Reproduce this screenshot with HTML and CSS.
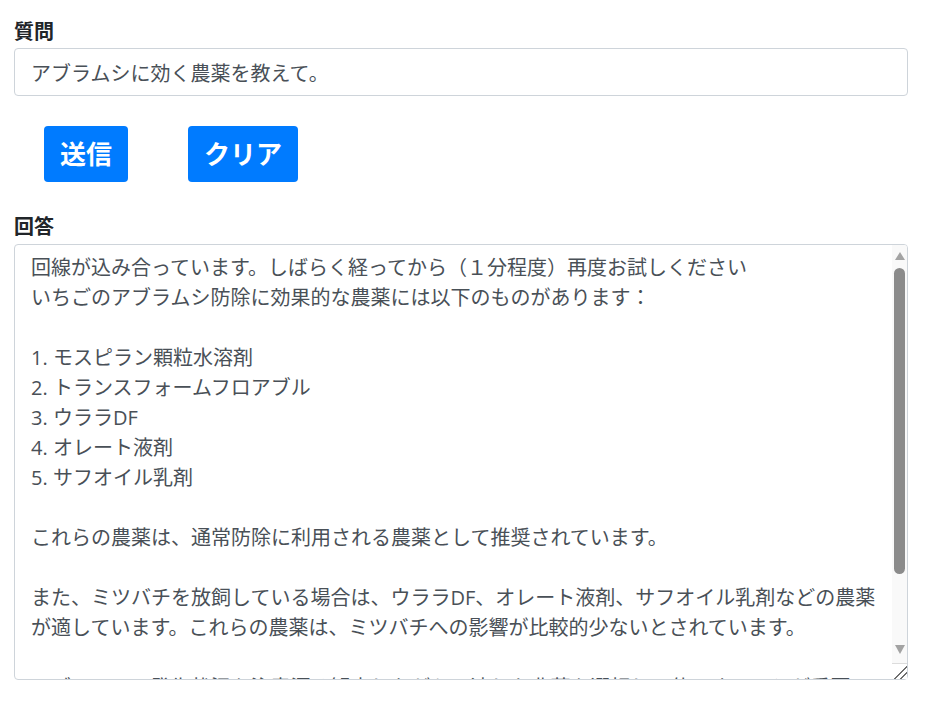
FILE: index.html
```html
<!DOCTYPE html>
<html lang="ja">
<head>
<meta charset="utf-8">
<title>質問</title>
<link rel="stylesheet" href="styles.css">
</head>
<body>
<main class="page">
  <label class="field-label" for="q">質問</label>
  <input id="q" class="form-control" type="text" value="アブラムシに効く農薬を教えて。">
  <div class="actions">
    <button class="btn" type="button">送信</button>
    <button class="btn" type="button">クリア</button>
  </div>
  <label class="field-label answer-label" for="a">回答</label>
  <div class="answer-wrap">
    <textarea id="a" class="form-control answer">回線が込み合っています。しばらく経ってから（１分程度）再度お試しください
いちごのアブラムシ防除に効果的な農薬には以下のものがあります：

1. モスピラン顆粒水溶剤
2. トランスフォームフロアブル
3. ウララDF
4. オレート液剤
5. サフオイル乳剤

これらの農薬は、通常防除に利用される農薬として推奨されています。

また、ミツバチを放飼している場合は、ウララDF、オレート液剤、サフオイル乳剤などの農薬が適しています。これらの農薬は、ミツバチへの影響が比較的少ないとされています。

アブラムシの発生状況を注意深く観察しながら、適した農薬を選択し、使用することが重要です。
</textarea>
    <div class="scrollbar" aria-hidden="true">
      <span class="sb-arrow sb-up"></span>
      <span class="sb-thumb"></span>
      <span class="sb-spacer"></span>
      <span class="sb-arrow sb-down"></span>
    </div>
  </div>
</main>
</body>
</html>
```
FILE: styles.css
```css
html, body {
  margin: 0;
  padding: 0;
  background: #ffffff;
}

body {
  font-family: "Open Sans", "Noto Sans CJK JP", sans-serif;
  color: #212529;
}

.page {
  display: flex;
  flex-direction: column;
  width: 894px;
  padding: 17px 0 0 14px;
}

.field-label {
  display: block;
  font-size: 20px;
  line-height: 30px;
  font-weight: bold;
  color: #212529;
  margin-bottom: 1px;
}

.answer-label {
  margin-bottom: 2px;
}

.form-control {
  box-sizing: border-box;
  width: 894px;
  font-family: "Open Sans", "Noto Sans CJK JP", sans-serif;
  font-size: 20px;
  line-height: 30px;
  color: #495057;
  background: #ffffff;
  border: 1px solid #ced4da;
  border-radius: 4px;
  padding: 8px 16px;
  margin: 0;
  outline: none;
}

input.form-control {
  height: 48px;
}

.answer-wrap {
  position: relative;
  display: flex;
}

.answer {
  height: 436px;
  padding-right: 31px;
  resize: vertical;
  overflow: hidden;
}

.answer::-webkit-resizer {
  background-color: #ffffff;
  background-image: linear-gradient(135deg, transparent 56%, #6e6e6e 56%, #6e6e6e 63%, transparent 63%, transparent 74%, #6e6e6e 74%, #6e6e6e 81%, transparent 81%);
}

.scrollbar {
  position: absolute;
  top: 1px;
  right: 1px;
  width: 15px;
  height: 419px;
  box-sizing: border-box;
  padding: 7px 0 9px 0;
  background: #f9f9f9;
  border-bottom: 1px solid #dcdcdc;
  display: flex;
  flex-direction: column;
  align-items: center;
  border-top-right-radius: 3px;
}

.sb-arrow {
  display: block;
  width: 0;
  height: 0;
  border-left: 5.5px solid transparent;
  border-right: 5.5px solid transparent;
}

.sb-up {
  border-bottom: 8px solid #a3a3a3;
}

.sb-down {
  border-top: 9px solid #a3a3a3;
}

.sb-thumb {
  display: block;
  width: 11px;
  height: 306px;
  margin-top: 8px;
  border-radius: 6px;
  background: #8b8b8b;
}

.sb-spacer {
  flex: 1;
}

.actions {
  display: flex;
  padding: 30px 0 30px 0;
}

.btn {
  font-family: "Open Sans", "Noto Sans CJK JP", sans-serif;
  font-size: 26px;
  line-height: 40px;
  font-weight: bold;
  color: #ffffff;
  background: #007bff;
  border: none;
  border-radius: 4px;
  padding: 8px 16px;
  margin: 0 30px;
  cursor: pointer;
}
```
